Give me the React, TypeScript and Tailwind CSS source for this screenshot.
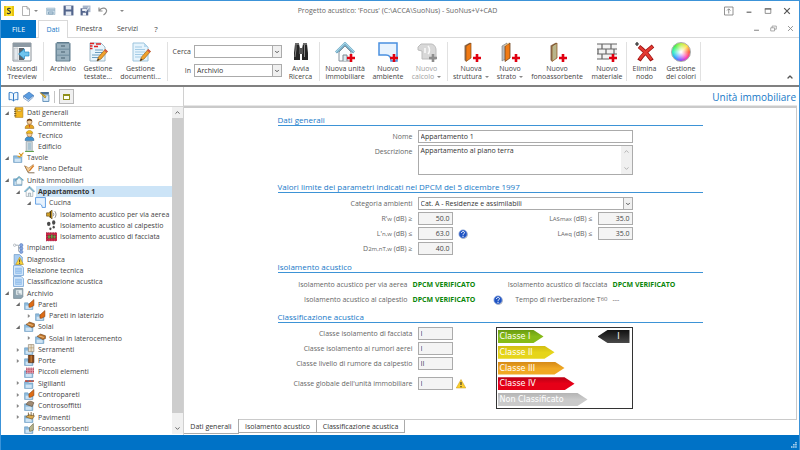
import type { ReactNode } from "react";
import { ChevronDown, ChevronUp } from "lucide-react";

/* ---------- icons ---------- */

function Svg({ children, className = "size-[10px]" }: { children: ReactNode; className?: string }) {
  return (
    <svg viewBox="0 0 20 20" className={`${className} shrink-0`} fill="none" aria-hidden="true">
      {children}
    </svg>
  );
}

const Plus = ({ color = "#e00010" }: { color?: string }) => (
  <path d="M16 12v8M12 16h8" stroke={color} strokeWidth="2.6" />
);

const Panel = ({ fill }: { fill: string }) => (
  <>
    <path d="M5 4l5-3v15l-5 3.500z" fill={fill} stroke="#8b4a12" strokeWidth=".7" />
    <path d="M3.500 3.500l5-2.700 1.500.4-5 3v15l-1.500-1z" fill="#6e4420" fillOpacity=".75" />
  </>
);

const PencilMark = () => (
  <>
    <path d="M9 19l1.500-4L17 7.500l2.500 2L13 17z" fill="#f0a12c" stroke="#9c6418" strokeWidth=".7" />
    <path d="M16 8.600l2.500 2.100 1.300-1.500L17.300 7z" fill="#cf5a4a" />
    <path d="M9 19l1-2.600 1.600 1.300z" fill="#333" />
  </>
);

const House = () => (
  <>
    <path d="M4 10v9h12v-9l-6-6z" fill="#fbfdfe" stroke="#83909a" />
    <path d="M1 10.500L10 1.500l9 9" stroke="#5f9dbb" strokeWidth="2.600" />
    <path d="M1 10L10 1l9 9" stroke="#a9d6e8" strokeWidth="1.200" />
    <path d="M8 19v-6h4v6" fill="#dbe8ee" stroke="#7a8890" />
  </>
);

const Room = () => (
  <path d="M1 1h18v18h-6c0-4-2-6-5-6H1z" fill="#e8f3fe" stroke="#4a90e0" strokeWidth="1.500" />
);

const Folder = () => (
  <>
    <path d="M1 7h6l1.500 2H16v10H1z" fill="#8ebbdd" stroke="#5d91ba" />
    <path d="M3 12h11v6H3z" fill="#cfe4f4" />
  </>
);

const icons: Record<string, ReactNode> = {
  hide: (
    <>
      <path d="M1 1h18v18H1z" fill="#fff" stroke="#8a9299" />
      <path d="M1 1h18v4H1z" fill="#8d9aa4" />
      <path d="M2 6h4v12H2z" fill="#e4e9ed" stroke="#a8b0b6" strokeWidth=".6" />
      <path d="M7 6h5v12H7z" fill="#5c646b" />
      <path d="M6.500 12l6-5v3H17v4h-4.500v3z" fill="#6fc4ee" stroke="#2a8cc4" strokeWidth=".7" />
    </>
  ),
  cabinet: (
    <>
      <path d="M3 1.500L4 .5h12l1 1V19H3z" fill="#7d98a8" stroke="#617d8e" />
      <path d="M4 2h12v4.500H4zM4 8h12v4.500H4zM4 14h12v4.500H4z" fill="#9ab1be" />
      <path d="M8 4h4M8 10h4M8 16h4" stroke="#47606e" strokeWidth="1.200" />
    </>
  ),
  header: (
    <>
      <path d="M2 1h11l4 4v14H2z" fill="#e9f5fc" stroke="#9fb9c8" />
      <path d="M7 8h8M7 10.500h8M4 13h9M4 15.500h7" stroke="#6c9ec0" />
      <path d="M2 1.500h4M2 4h2.500M2 6.500h2.500M8 2h5M6 4.500h4" stroke="#e02020" strokeWidth="1.300" />
      <PencilMark />
    </>
  ),
  doc: (
    <>
      <path d="M2 1h11l4 4v14H2z" fill="#e6f4fd" stroke="#9cc3dc" />
      <path d="M13 1v4h4z" fill="#b9daee" />
      <path d="M4 5h7M4 7.500h10M4 10h10M4 12.500h8M4 15h6" stroke="#a3cbe5" />
      <PencilMark />
    </>
  ),
  binoculars: (
    <>
      <path d="M4 2h4l1 5v11H3V11zM12 2h4l1 9v7h-6V7z" fill="#252525" />
      <path d="M8 6h4v6H8z" fill="#555" />
      <path d="M5 3v4L4 15M13.500 3v12" stroke="#8a8a8a" />
      <path d="M4 1h4v2H4zM12 1h4v2h-4z" fill="#6b6b6b" />
    </>
  ),
  newHouse: <><House /><Plus /></>,
  newRoom: <><Room /><Plus /></>,
  newCalc: (
    <>
      <path d="M1 5l3-3h10c3 0 5 3 5 6v9H5V9L1 8z" fill="#d8d8d8" stroke="#bcbcbc" />
      <path d="M8 6v5M11 4c2 2 2 6 0 8" stroke="#fafafa" strokeWidth="1.500" />
      <Plus color="#8e8e8e" />
    </>
  ),
  struct: <><Panel fill="#f07a14" /><Plus /></>,
  layer: (
    <>
      <path d="M2 4l5-3v15l-5 3z" fill="#b8bcc0" stroke="#777" strokeWidth=".6" />
      <path d="M5 4l5-3v15l-5 3.500z" fill="#f07a14" stroke="#6e4420" strokeWidth=".8" />
      <path d="M4.500 4l4.500-3" stroke="#efc480" />
      <Plus />
    </>
  ),
  absorb: <><Panel fill="#b9b58b" /><Plus /></>,
  material: (
    <>
      <path d="M0 2h20v15H0z" fill="#f3f3f3" />
      <path d="M0 2h20M0 7h20M0 12h20M0 17h12M5 2v5M14 2v5M9 7v5M17 7v5M5 12v5M1 7v5" stroke="#646464" strokeWidth="1.200" />
      <Plus />
    </>
  ),
  remove: (
    <>
      <path d="M4 4.500c4 3 9 8 13 14M18 4C13 8 8 12 4 18.500" stroke="#9c1010" strokeWidth="4" />
      <path d="M4.500 5c4 3 8 7 12 12.500M17.500 4.500C13 8 8 12 4.500 17.500" stroke="#e33a32" strokeWidth="2.400" />
      <path d="M2 0v4M0 2h4" stroke="#222" strokeWidth="1.200" />
    </>
  ),
  notebook: (
    <>
      <path d="M4 1h14v18H4z" fill="#f3b61f" stroke="#a87510" />
      <path d="M8 5h7v3H8z" fill="#fff2b8" stroke="#a87510" />
      <path d="M2 4h4M2 8h4M2 12h4M2 16h4" stroke="#5a4a20" strokeWidth="1.500" />
    </>
  ),
  client: (
    <>
      <path d="M2 19c0-5 3-7 8-7s8 2 8 7z" fill="#e7a622" stroke="#99681a" />
      <circle cx="10" cy="7" r="4.500" fill="#f7cf9a" stroke="#7b4c1c" />
      <path d="M5 6c0-6 10-6 10 0-3-2-7-2-10 0z" fill="#6b3d14" />
      <path d="M9 13h2l-1 5z" fill="#c02020" />
    </>
  ),
  tech: (
    <>
      <path d="M2 19c0-5 3-7 8-7s8 2 8 7z" fill="#3f92d2" stroke="#245d90" />
      <circle cx="10" cy="8" r="4.500" fill="#f7cf9a" stroke="#8c6330" />
      <path d="M4 6c1-7 11-7 12 0z" fill="#f4bd1c" stroke="#a87810" />
    </>
  ),
  building: (
    <>
      <path d="M4 1h11v18H4z" fill="#d4dce0" stroke="#79868e" />
      <path d="M7 3h6v13H7z" fill="#aac4d2" />
      <path d="M2 19h16" stroke="#5ea04a" strokeWidth="2" />
    </>
  ),
  tables: (
    <>
      <Folder />
      <path d="M8 7l4 2 7-8M11 2l6 6" stroke="#d79a27" strokeWidth="2" />
    </>
  ),
  plan: (
    <>
      <path d="M1 3l7 13h11" stroke="#5f4420" strokeWidth="1.400" />
      <path d="M2 4c4 0 5 4 7 3l8-6-6 11-4 2z" fill="#f7d19b" stroke="#a26b2c" />
      <path d="M10 12l8-9" stroke="#e07818" strokeWidth="2" />
    </>
  ),
  units: (
    <>
      <Folder />
      <path d="M6 10v7h10v-7l-5-5z" fill="#eef7fa" stroke="#7899aa" />
      <path d="M4 10l7-7 8 7" stroke="#62a1b9" strokeWidth="2" />
    </>
  ),
  house: <House />,
  room: <Room />,
  speaker: (
    <>
      <path d="M1 7h4l6-5v16l-6-5H1z" fill="#d9a526" stroke="#453411" />
      <path d="M8 4v12" stroke="#3c2d10" strokeWidth="2" />
      <path d="M13 7c1.500 2 1.500 4 0 6M16 4c3 4 3 8 0 12" stroke="#777" strokeWidth="1.500" />
    </>
  ),
  steps: (
    <>
      <ellipse cx="5" cy="7" rx="3.200" ry="4" fill="#4a4a4a" />
      <ellipse cx="8" cy="16" rx="2" ry="2.500" fill="#4a4a4a" />
      <ellipse cx="14" cy="4.500" rx="3" ry="4" fill="#4a4a4a" />
      <ellipse cx="14" cy="13" rx="2" ry="2.500" fill="#4a4a4a" />
    </>
  ),
  facade: (
    <>
      <path d="M0 3h20v15H0z" fill="#d32a4c" />
      <path d="M0 3h20M0 8h20M0 13h20M0 18h20M3 3v15M8 3v15M13 3v15M18 3v15" stroke="#7c1430" strokeDasharray="2 2" />
      <path d="M4 8h3v5H4zM9 7h3v6H9zM14 8h3v5h-3z" fill="#64b84c" stroke="#2c6b2c" strokeWidth=".6" />
    </>
  ),
  plant: (
    <>
      <path d="M4 4h6v11h6M10 8h6" stroke="#8a95a0" strokeWidth="1.300" />
      <circle cx="3" cy="4" r="2.200" fill="#fff" stroke="#8a95a0" />
      <circle cx="15" cy="4" r="3" fill="#86a8e4" stroke="#4d72b5" />
      <circle cx="15" cy="10" r="3" fill="#86a8e4" stroke="#4d72b5" />
      <circle cx="15" cy="16" r="3" fill="#86a8e4" stroke="#4d72b5" />
    </>
  ),
  diagnostic: (
    <>
      <path d="M2 1h10l5 5v13H2z" fill="#a8cdf2" stroke="#5788b8" />
      <path d="M12 6l7 13H5z" fill="#ffd83a" stroke="#b88a10" />
      <path d="M12 10v5M12 16v2" stroke="#333" strokeWidth="1.600" />
    </>
  ),
  report: (
    <>
      <path d="M1 1h14l4 4v14H1z" fill="#d8eafb" stroke="#6a9bd0" strokeWidth="1.400" />
      <path d="M4 5h12v11H4z" fill="#8fbcec" />
      <path d="M5 7.500h10M5 10.500h10M5 13.500h10" stroke="#c7e0f8" strokeWidth="1.200" />
    </>
  ),
  archive: (
    <>
      <path d="M3 1h15v15l-3 3H1V3z" fill="#8fa6b3" stroke="#61747f" />
      <path d="M5 3h12v10H5z" fill="#eaf1f4" stroke="#7e929d" />
      <path d="M9 5v6h5" stroke="#7e929d" strokeWidth="1.500" />
    </>
  ),
  walls: <><Folder /><path d="M9 9l9-8v11l-6 3H9z" fill="#dd6c16" stroke="#7c3b0c" /></>,
  floors: <><Folder /><path d="M4 6l6-4 9 3v5l-5 2z" fill="#c3762c" stroke="#60350e" /><path d="M6 5l10 3" stroke="#f3cd94" strokeWidth="1.500" /></>,
  windows: <><Folder /><path d="M8 1h10v13H8z" fill="#e6e0d2" stroke="#82725a" /><path d="M13 1v13M8 7h10" stroke="#b08a50" /></>,
  doors: <><Folder /><path d="M8 0h10v14H8z" fill="#8b4a1a" stroke="#3f200a" /><path d="M13 1v12" stroke="#d18a40" strokeWidth="2" /></>,
  small: <><Folder /><path d="M4 2h14v9H4z" fill="#e8a8b4" /><path d="M4 2h14M4 5h14M4 8h14M4 11h14" stroke="#a32642" strokeDasharray="2 2" strokeWidth="1.800" /></>,
  seals: <><Folder /><path d="M2 4h16v3H2z" fill="#b53a2c" /><path d="M6 5h3M13 5h3" stroke="#4d84b4" strokeWidth="2" /></>,
  ceilings: <><Folder /><path d="M4 8c3-7 9-7 14-3l-3 7z" fill="#a18b74" stroke="#54422e" /></>,
  paving: <><Folder /><path d="M3 9l6-4 10 2-4 6z" fill="#dba94e" stroke="#664c20" /><path d="M8 1v6M13 0v7M17 2v5" stroke="#664c20" strokeWidth="1.400" /></>,
  absorbers: <><Folder /><path d="M10 8l7-7v12l-5 2h-2z" fill="#b9b58b" stroke="#5c583a" /></>,
};

const HelpIcon = () => (
  <Svg>
    <circle cx="11" cy="11" r="8.500" fill="#9a9a9a" />
    <circle cx="10" cy="10" r="8.500" fill="#1f54c4" stroke="#c3cfe8" strokeWidth="1.500" />
    <path d="M7 8c0-4 6-4 6-.5 0 2-3 2-3 4M10 13.500V16" stroke="#fff" strokeWidth="2" />
  </Svg>
);

/* ---------- ribbon ---------- */

function RibbonButton({ icon, top, bottom, width, arrow, disabled }: {
  icon: string; top: string; bottom?: string; width: string; arrow?: boolean; disabled?: boolean;
}) {
  return (
    <button
      type="button"
      disabled={disabled}
      className={`${width} flex shrink-0 flex-col items-center whitespace-nowrap pt-1 leading-[8px] ${disabled ? "text-[#a0a0a0]" : "text-[#444]"}`}
    >
      {icon === "colors" ? (
        <span className="size-[20px] rounded-full border border-[#aaa] bg-[radial-gradient(circle,#fff_5%,transparent_65%),conic-gradient(#b6f04a,#ffe24a,#ff5a3a,#ff3ab0,#8a4aff,#2aa0ff,#2af0c0,#4af04a,#b6f04a)]" />
      ) : (
        <Svg className="size-[20px]">{icons[icon]}</Svg>
      )}
      <span className="mt-[3px]">{top}</span>
      <span className="flex items-center gap-[3px]">
        {bottom}
        {arrow && <span className="border-x-2 border-t-2 border-x-transparent border-t-[#888]" />}
      </span>
    </button>
  );
}

const Sep = () => <span className="my-1 w-px shrink-0 bg-[#e1e1e1]" />;

function Combo({ id, value, className = "" }: { id: string; value: string; className?: string }) {
  return (
    <span className={`relative flex h-[13px] ${className}`}>
      <select id={id} defaultValue={value} className="w-full appearance-none border border-[#ababab] bg-white pl-[2px] text-[7px] leading-[11px] text-[#333]">
        <option>{value}</option>
      </select>
      <span className="pointer-events-none absolute inset-y-px right-px flex w-[9px] items-center justify-center border-l border-[#ababab] bg-[#f0f0f0]">
        <ChevronDown size={6} strokeWidth={4} className="text-[#555]" />
      </span>
    </span>
  );
}

function Ribbon() {
  return (
    <div className="flex h-[49px] shrink-0 border-b-2 border-[#808080]">
      <RibbonButton icon="hide" top="Nascondi" bottom="Treeview" width="w-[42px]" />
      <Sep />
      <RibbonButton icon="cabinet" top="Archivio" width="w-[38px]" />
      <RibbonButton icon="header" top="Gestione" bottom="testate..." width="w-[32px]" />
      <RibbonButton icon="doc" top="Gestione" bottom="documenti..." width="w-[53px]" />
      <Sep />
      <div className="grid w-[114px] shrink-0 grid-cols-[23px_88px] content-start items-center gap-x-[3px] gap-y-[6px] pt-[7px] text-[#444]">
        <label htmlFor="cerca" className="text-right">Cerca</label>
        <Combo id="cerca" value="" />
        <label htmlFor="in" className="text-right">In</label>
        <Combo id="in" value="Archivio" />
      </div>
      <RibbonButton icon="binoculars" top="Avvia" bottom="Ricerca" width="w-[37px]" />
      <Sep />
      <RibbonButton icon="newHouse" top="Nuova unità" bottom="immobiliare" width="w-[50px]" />
      <RibbonButton icon="newRoom" top="Nuovo" bottom="ambiente" width="w-[36px]" />
      <RibbonButton icon="newCalc" top="Nuovo" bottom="calcolo" width="w-[41px]" arrow disabled />
      <Sep />
      <RibbonButton icon="struct" top="Nuova" bottom="struttura" width="w-[46px]" arrow />
      <RibbonButton icon="layer" top="Nuovo" bottom="strato" width="w-[32px]" arrow />
      <RibbonButton icon="absorb" top="Nuovo" bottom="fonoassorbente" width="w-[62px]" />
      <RibbonButton icon="material" top="Nuovo" bottom="materiale" width="w-[38px]" />
      <Sep />
      <RibbonButton icon="remove" top="Elimina" bottom="nodo" width="w-[35px]" />
      <RibbonButton icon="colors" top="Gestione" bottom="dei colori" width="w-[38px]" />
      <Sep />
      <button type="button" aria-label="Comprimi" className="mb-1 ml-auto mr-[5px] self-end text-[#555]">
        <ChevronUp size={8} strokeWidth={4} />
      </button>
    </div>
  );
}

function TitleBar() {
  return (
    <header className="flex h-[19px] shrink-0 items-center text-[#666]">
      <div className="flex flex-1 items-center pl-[3px]">
        <Svg className="size-[10px]">
          <path d="M0 0h20v20H0z" fill="#fbe12c" />
          <path d="M0 0h4v20H0zM16 0h4v20h-4z" fill="#e8c40e" />
          <path d="M13 6c-1-2-6-2-6 .5S13 9 13 12.500s-6 3.500-7 1" stroke="#333" strokeWidth="2.200" />
        </Svg>
        <button type="button" aria-label="Nuovo" className="ml-[7px] flex items-center gap-[3px]">
          <Svg><path d="M3 1h9l5 5v13H3zM12 1v5h5" stroke="#8a8a8a" strokeWidth="1.300" /></Svg>
          <span className="border-x-2 border-t-2 border-x-transparent border-t-[#888]" />
        </button>
        <button type="button" aria-label="Apri" className="ml-[8px]">
          <Svg><path d="M1 4h17v13H1z" fill="#c9dbe8" stroke="#8daabf" /><path d="M2 8h16M5 12h9v4H5z" stroke="#7698b2" strokeWidth="1.500" /></Svg>
        </button>
        <button type="button" aria-label="Salva" className="ml-[7px]">
          <Svg className="size-[11px]"><path d="M1 1h18v18H1z" fill="#53658c" /><path d="M5 2h10v6H5zM5 12h10v7H5z" fill="#e3e9f2" /></Svg>
        </button>
        <button type="button" aria-label="Salva con nome" className="ml-[6px]">
          <Svg className="size-[11px]"><path d="M5 1h14v12H5z" fill="#a5b4c9" /><path d="M1 6h14v13H1z" fill="#53658c" /><path d="M4 7h8v4H4zM5 14h6v5H5z" fill="#edf1f7" /><path d="M10 12l7-9" stroke="#dde4ee" strokeWidth="2" /></Svg>
        </button>
        <button type="button" aria-label="Annulla" className="ml-[7px]">
          <Svg><path d="M2 3v7h7M3 9c4-8 16-5 14 2-1 3-3 5-6 7" stroke="#8c8c8c" strokeWidth="2.400" /></Svg>
        </button>
        <button type="button" aria-label="Personalizza" className="ml-[12px]">
          <span className="block border-x-2 border-t-2 border-x-transparent border-t-[#888]" />
        </button>
      </div>
      <h1 className="whitespace-nowrap">Progetto acustico: 'Focus' (C:\ACCA\SuoNus) - SuoNus+V+CAD</h1>
      <div className="flex flex-1 items-center justify-end gap-[11px] pr-[8px]">
        <button type="button" aria-label="Opzioni barra"><Svg><path d="M1 2h17v16H1zM9.500 15V6M6 9l3.500-3.500L13 9" stroke="#777" strokeWidth="1.600" /></Svg></button>
        <button type="button" aria-label="Riduci"><Svg className="size-[8px]"><path d="M4 13h12" stroke="#666" strokeWidth="3" /></Svg></button>
        <button type="button" aria-label="Ingrandisci"><Svg className="size-[8px]"><path d="M3 4h14v12H3z" stroke="#777" strokeWidth="2" /><path d="M2 5h16" stroke="#666" strokeWidth="3" /></Svg></button>
        <button type="button" aria-label="Chiudi"><Svg className="size-[8px]"><path d="M3 3l14 14M17 3L3 17" stroke="#555" strokeWidth="3" /></Svg></button>
      </div>
    </header>
  );
}

function MenuTabs() {
  return (
    <nav className="flex h-[18px] shrink-0 text-[#444]">
      <button type="button" className="w-[35px] bg-[#0072c6] text-white">FILE</button>
      <span className="w-[2px] border-b border-[#d9d9d9]" />
      <button type="button" className="w-[30px] border-x border-t border-[#d9d9d9] text-[#1779c8]">Dati</button>
      <div className="flex flex-1 items-center border-b border-[#d9d9d9]">
        <button type="button" className="w-[42px]">Finestra</button>
        <button type="button" className="w-[35px]">Servizi</button>
        <button type="button" className="w-[22px] text-[8px]">?</button>
        <span className="ml-auto flex items-center gap-[10px] pr-[5px] text-[#888]">
          <button type="button" aria-label="Riduci documento"><Svg className="size-[7px]"><path d="M3 15h14" stroke="currentColor" strokeWidth="3" /></Svg></button>
          <button type="button" aria-label="Ripristina documento"><Svg className="size-[7px]"><path d="M2 8h11v9H2zM6 8V3h12v9h-5" stroke="currentColor" strokeWidth="2" /></Svg></button>
          <button type="button" aria-label="Chiudi documento"><Svg className="size-[7px]"><path d="M3 3l14 14M17 3L3 17" stroke="currentColor" strokeWidth="2.500" /></Svg></button>
        </span>
      </div>
    </nav>
  );
}

/* ---------- tree ---------- */

type Node = { label: string; icon: string; level: 0 | 1 | 2 | 3; state?: "open" | "closed"; selected?: boolean };

const tree: Node[] = [
  { label: "Dati generali", icon: "notebook", level: 0, state: "open" },
  { label: "Committente", icon: "client", level: 1 },
  { label: "Tecnico", icon: "tech", level: 1 },
  { label: "Edificio", icon: "building", level: 1 },
  { label: "Tavole", icon: "tables", level: 0, state: "open" },
  { label: "Piano Default", icon: "plan", level: 1 },
  { label: "Unità Immobiliari", icon: "units", level: 0, state: "open" },
  { label: "Appartamento 1", icon: "house", level: 1, state: "open", selected: true },
  { label: "Cucina", icon: "room", level: 2, state: "open" },
  { label: "Isolamento acustico per via aerea", icon: "speaker", level: 3 },
  { label: "Isolamento acustico al calpestio", icon: "steps", level: 3 },
  { label: "Isolamento acustico di facciata", icon: "facade", level: 3 },
  { label: "Impianti", icon: "plant", level: 0 },
  { label: "Diagnostica", icon: "diagnostic", level: 0 },
  { label: "Relazione tecnica", icon: "report", level: 0 },
  { label: "Classificazione acustica", icon: "report", level: 0 },
  { label: "Archivio", icon: "archive", level: 0, state: "open" },
  { label: "Pareti", icon: "walls", level: 1, state: "open" },
  { label: "Pareti in laterizio", icon: "walls", level: 2, state: "closed" },
  { label: "Solai", icon: "floors", level: 1, state: "open" },
  { label: "Solai in laterocemento", icon: "floors", level: 2, state: "closed" },
  { label: "Serramenti", icon: "windows", level: 1, state: "closed" },
  { label: "Porte", icon: "doors", level: 1, state: "closed" },
  { label: "Piccoli elementi", icon: "small", level: 1 },
  { label: "Sigillanti", icon: "seals", level: 1, state: "closed" },
  { label: "Contropareti", icon: "walls", level: 1, state: "closed" },
  { label: "Controsoffitti", icon: "ceilings", level: 1, state: "closed" },
  { label: "Pavimenti", icon: "paving", level: 1, state: "closed" },
  { label: "Fonoassorbenti", icon: "absorbers", level: 1 },
];

const indent = ["pl-[3px]", "pl-[14px]", "pl-[25px]", "pl-[36px]"];

function Sidebar() {
  return (
    <aside className="flex w-[182px] shrink-0 flex-col">
      <div className="flex h-[20px] shrink-0 items-center border-b border-[#d5d5d5] pl-[7px]">
        <button type="button" aria-label="Libro"><Svg className="size-[11px]"><path d="M2 3c3-1 6 0 8 2v13c-2-2-5-3-8-2zM10 5c2-2 5-3 8-2v13c-3-1-6 0-8 2z" fill="#eef7fe" stroke="#2f77c4" strokeWidth="1.800" /></Svg></button>
        <button type="button" aria-label="Volume" className="ml-[4px]"><Svg className="size-[11px]"><path d="M1 9l10-7 8 6-9 9z" fill="#5a9ce0" stroke="#2c66ad" /><path d="M1 9v4l9 6 9-8V8l-9 8z" fill="#eef4fb" stroke="#2c66ad" /></Svg></button>
        <button type="button" aria-label="Modifica" className="ml-[5px]"><Svg className="size-[11px]"><path d="M7 7h11v12H7z" fill="#d9ebfa" stroke="#4b7fae" strokeWidth="1.500" /><path d="M2 2h16v4H6z" fill="#4a6f93" /><path d="M2 3l9 10 2-3z" fill="#f1c232" stroke="#8a6a14" /></Svg></button>
        <span className="ml-[4px] h-[12px] w-px bg-[#c4c4c4]" />
        <button type="button" aria-label="Finestra" className="ml-[4px] flex size-[15px] items-center justify-center border border-[#b8b8b8] bg-[#f0f0f0]">
          <span className="h-[6px] w-[7px] border border-t-2 border-[#8f8f1a] bg-[#fffff0]" />
        </button>
      </div>
      <div className="flex min-h-0 flex-1 pb-px">
        <ul className="flex min-w-0 flex-1 flex-col">
          {tree.map((n) => (
            <li key={n.label} className="flex min-h-0 flex-1">
              <button type="button" className={`flex flex-1 items-center whitespace-nowrap text-left leading-[11px] ${indent[n.level]}`}>
                <Svg className="size-[6px]">
                  {n.state === "open" && <path d="M16 4v13H3z" fill="#666" />}
                  {n.state === "closed" && <path d="M6 3l8 7-8 7z" fill="#888" />}
                </Svg>
                <span className="ml-[3px] mr-px flex"><Svg className="size-[11px]">{icons[n.icon]}</Svg></span>
                <span className={`flex-1 self-stretch pl-[2px] ${n.selected ? "bg-[#cce4f7] font-bold text-[#333]" : "text-[#444]"}`}>{n.label}</span>
              </button>
            </li>
          ))}
        </ul>
        <div className="flex w-[11px] flex-col items-center bg-[#f0f0f0] text-[#555]">
          <button type="button" aria-label="Scorri su" className="flex h-[11px] items-center"><ChevronUp size={7} strokeWidth={3} /></button>
          <span className="w-full flex-1 bg-[#cdcdcd]" />
          <span className="h-[10px]" />
          <button type="button" aria-label="Scorri giù" className="flex h-[11px] items-center"><ChevronDown size={7} strokeWidth={3} /></button>
        </div>
      </div>
    </aside>
  );
}

/* ---------- form ---------- */

const Heading = ({ children }: { children: ReactNode }) => (
  <h3 className="border-b border-[#3d93d6] text-[8px] leading-[11px] text-[#1779c8]">{children}</h3>
);

const Sub = ({ children }: { children: ReactNode }) => <span className="text-[6px] leading-none">{children}</span>;

function ShortField({ id, label, value, numeric, wide = true, children }: {
  id: string; label: ReactNode; value: string; numeric?: boolean; wide?: boolean; children?: ReactNode;
}) {
  return (
    <div className="flex h-[13px] items-center gap-[5px]">
      <label htmlFor={id} className={`shrink-0 text-right ${wide ? "w-[135px]" : ""}`}>{label}</label>
      <input
        id={id}
        readOnly
        defaultValue={value}
        className={`h-[13px] w-[35px] border border-[#ababab] bg-[#f4f4f4] px-[2px] text-[#444] ${numeric ? "text-right" : ""}`}
      />
      {children}
    </div>
  );
}

const Verified = () => <strong className="text-[#0a860a]">DPCM VERIFICATO</strong>;

const classes = [
  { label: "Classe I", look: "w-[46px] bg-linear-to-b from-[#6a9c12] to-[#86bb18] to-50% [clip-path:polygon(0_0,36px_0,100%_50%,36px_100%,0_100%)]" },
  { label: "Classe II", look: "w-[57px] bg-linear-to-b from-[#d2bd12] to-[#e6d51a] to-50% [clip-path:polygon(0_0,47px_0,100%_50%,47px_100%,0_100%)]" },
  { label: "Classe III", look: "w-[67px] bg-linear-to-b from-[#d58a18] to-[#f0a823] to-50% [clip-path:polygon(0_0,57px_0,100%_50%,57px_100%,0_100%)]" },
  { label: "Classe IV", look: "w-[77px] bg-linear-to-b from-[#b80014] to-[#e60018] to-50% [clip-path:polygon(0_0,67px_0,100%_50%,67px_100%,0_100%)]" },
  { label: "Non Classificato", look: "w-[90px] bg-linear-to-b from-[#b4b4b4] to-[#cacaca] to-50% [clip-path:polygon(0_0,80px_0,100%_50%,80px_100%,0_100%)]" },
];

function ClassScale() {
  return (
    <div className="flex h-[82px] w-[137px] justify-between border border-[#333] bg-white p-[2px] pl-px font-['DejaVu_Sans',sans-serif] text-[8px] leading-[13px] text-white">
      <ul className="flex flex-col justify-between">
        {classes.map((c) => (
          <li key={c.label} className={`h-[13px] whitespace-nowrap pl-[2px] ${c.look}`}>{c.label}</li>
        ))}
      </ul>
      <span className="h-[13px] w-[32px] bg-linear-to-b from-[#111] to-[#4a4a4a] pl-[10px] text-center [clip-path:polygon(10px_0,100%_0,100%_100%,10px_100%,0_50%)]">I</span>
    </div>
  );
}

function UnitForm() {
  return (
    <form className="mx-auto w-[425px] pt-[6px] leading-[13px] text-[#666]">
      <Heading>Dati generali</Heading>
      <div className="mt-[4px] grid w-[355px] grid-cols-[135px_215px] gap-x-[5px] gap-y-[2px] text-right">
        <label htmlFor="nome">Nome</label>
        <input id="nome" defaultValue="Appartamento 1" className="h-[13px] border border-[#ababab] px-[2px] text-[#333]" />
        <label htmlFor="descrizione">Descrizione</label>
        <div className="flex h-[30px] border border-[#ababab]">
          <textarea id="descrizione" defaultValue="Appartamento al piano terra" className="flex-1 resize-none overflow-hidden px-[2px] leading-[9px] text-[#333]" />
          <span className="flex w-[11px] flex-col items-center justify-between bg-[#f0f0f0] py-[2px] text-[#aaa]">
            <ChevronUp size={7} strokeWidth={3} />
            <ChevronDown size={7} strokeWidth={3} />
          </span>
        </div>
      </div>

      <div className="mt-[6px]"><Heading>Valori limite dei parametri indicati nel DPCM del 5 dicembre 1997</Heading></div>
      <div className="mt-[4px] flex w-[355px] flex-col gap-[2px]">
        <div className="flex gap-[5px]">
          <label htmlFor="categoria" className="w-[135px] text-right">Categoria ambienti</label>
          <Combo id="categoria" value="Cat. A - Residenze e assimilabili" className="flex-1" />
        </div>
        <div className="flex justify-between">
          <ShortField id="rw" label={<>R'<Sub>w</Sub> (dB) ≥</>} value="50.0" numeric />
          <ShortField id="lasmax" label={<>L<Sub>ASmax</Sub> (dB) ≤</>} value="35.0" numeric wide={false} />
        </div>
        <div className="flex justify-between">
          <ShortField id="lnw" label={<>L'<Sub>n,w</Sub> (dB) ≤</>} value="63.0" numeric><HelpIcon /></ShortField>
          <ShortField id="laeq" label={<>L<Sub>Aeq</Sub> (dB) ≤</>} value="35.0" numeric wide={false} />
        </div>
        <ShortField id="d2m" label={<>D<Sub>2m,nT,w</Sub> (dB) ≥</>} value="40.0" numeric />
      </div>

      <div className="mt-[6px]"><Heading>Isolamento acustico</Heading></div>
      <div className="mt-[5px] grid auto-rows-[13px] grid-cols-[130px_75px_10px_100px_1fr] items-center gap-x-[5px] gap-y-[2px] whitespace-nowrap">
        <span className="text-right">Isolamento acustico per via aerea</span>
        <Verified />
        <span className="col-span-2 text-right">Isolamento acustico di facciata</span>
        <Verified />
        <span className="text-right">Isolamento acustico al calpestio</span>
        <Verified />
        <HelpIcon />
        <span className="text-right">Tempo di riverberazione T<span className="align-top text-[6px]">60</span></span>
        <span>---</span>
      </div>

      <div className="mt-[5px]"><Heading>Classificazione acustica</Heading></div>
      <div className="mt-[4px] flex w-[355px] justify-between">
        <div className="flex flex-col gap-[2px]">
          <ShortField id="facciata" label="Classe isolamento di facciata" value="I" />
          <ShortField id="aerei" label="Classe isolamento ai rumori aerei" value="I" />
          <ShortField id="calpestio" label="Classe livello di rumore da calpestio" value="II" />
          <div className="mt-[5px]">
            <ShortField id="globale" label="Classe globale dell'unità immobiliare" value="I">
              <Svg className="-ml-[2px] size-[10px]">
                <path d="M10 1l9.500 17H.5z" fill="#fcd02c" stroke="#c79410" />
                <path d="M10 6v6M10 14v2.500" stroke="#333" strokeWidth="2.200" />
              </Svg>
            </ShortField>
          </div>
        </div>
        <ClassScale />
      </div>
    </form>
  );
}

function Workspace() {
  return (
    <main className="flex min-w-0 flex-1 flex-col border-l border-[#d0d0d0] pr-[2px]">
      <h2 className="h-[19px] shrink-0 border-b border-[#e6e6e6] pr-px text-right text-[10px] leading-[21px] text-[#1779c8]">Unità immobiliare</h2>
      <div className="min-h-0 flex-1 border-b border-r border-t-2 border-[#cacaca]">
        <UnitForm />
      </div>
      <div role="tablist" className="flex h-[15px] shrink-0 items-start text-[#333]">
        <button type="button" role="tab" aria-selected="true" className="-mt-px h-[15px] w-[55px] border-b border-r border-[#ababab] bg-white">Dati generali</button>
        <button type="button" role="tab" aria-selected="false" className="h-[13px] w-[78px] border-b border-r border-[#ababab]">Isolamento acustico</button>
        <button type="button" role="tab" aria-selected="false" className="h-[13px] w-[88px] border-b border-r border-[#ababab]">Classificazione acustica</button>
      </div>
    </main>
  );
}

export default function App() {
  return (
    <div className="flex h-screen flex-col border-x border-t border-[#3c93d8] bg-white font-['Open_Sans',sans-serif] text-[7px] leading-[9px]">
      <TitleBar />
      <MenuTabs />
      <Ribbon />
      <div className="flex min-h-0 flex-1">
        <Sidebar />
        <Workspace />
      </div>
      <footer className="flex h-[15px] shrink-0 items-end justify-end bg-[#0072c6] p-[2px]">
        <Svg className="size-[6px]">
          <path d="M14 0h5v5h-5zM7 7h5v5H7zM14 7h5v5h-5zM0 14h5v5H0zM7 14h5v5H7zM14 14h5v5h-5z" fill="#b9d9f0" />
        </Svg>
      </footer>
    </div>
  );
}
